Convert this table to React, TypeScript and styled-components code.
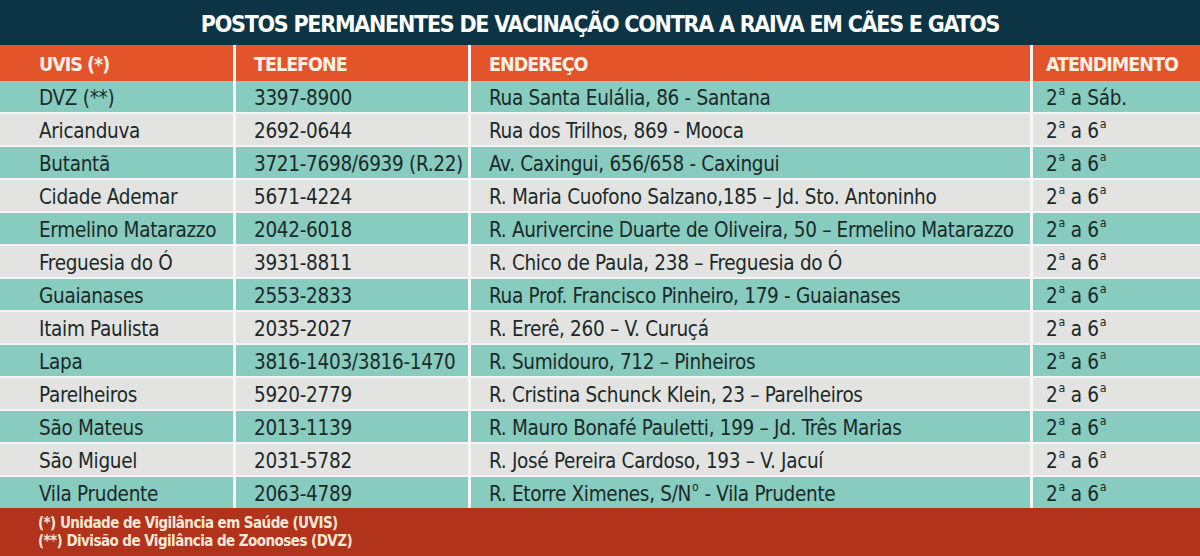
import React from "react";
import styled, { createGlobalStyle } from "styled-components";

const GlobalStyle = createGlobalStyle`
  html, body {
    margin: 0;
    padding: 0;
    background: #ffffff;
  }
  body {
    width: 1200px;
    height: 556px;
    overflow: hidden;
  }
`;

const BODY_FONT = `"DejaVu Sans Condensed", "DejaVu Sans", sans-serif`;
const BOLD_FONT = `"DejaVu Sans Condensed", "DejaVu Sans", sans-serif`;

type Tone = "teal" | "grey" | "head";

const toneColor: Record<Tone, string> = {
  teal: "#88cbbf",
  grey: "#e3e3e1",
  head: "#e4542b",
};

const Page = styled.div`
  width: 1200px;
  height: 556px;
  display: flex;
  flex-direction: column;
  background: #f4f4f2;
`;

const TitleBar = styled.header`
  height: 45px;
  flex: none;
  display: flex;
  align-items: center;
  justify-content: center;
  background: #0c3444;
  color: #ffffff;
  font-family: ${BOLD_FONT};
  font-weight: 700;
  font-size: 23px;
  letter-spacing: -1.25px;
  padding-top: 2px;
  box-sizing: border-box;
`;

const Row = styled.div<{ $height: number }>`
  display: grid;
  grid-template-columns: 233px 232px 559px 1fr;
  column-gap: 3px;
  height: ${(p) => p.$height}px;
  background: #f7f7f5;
`;

const Cell = styled.div<{ $tone: Tone }>`
  display: flex;
  align-items: center;
  padding: 3px 0 0 18px;
  background: ${(p) => toneColor[p.$tone]};
  white-space: pre;
  overflow: hidden;
  font-family: ${(p) => (p.$tone === "head" ? BOLD_FONT : BODY_FONT)};
  font-weight: ${(p) => (p.$tone === "head" ? 700 : 400)};
  font-size: ${(p) => (p.$tone === "head" ? 19.5 : 20.5)}px;
  letter-spacing: ${(p) => (p.$tone === "head" ? -1 : -0.3)}px;
  color: ${(p) => (p.$tone === "head" ? "#fbf0e4" : "#1b2a29")};

  &:first-child {
    padding-left: 39px;
  }
  &:last-child {
    padding-left: 13px;
  }
`;

const Body = styled.div`
  display: flex;
  flex-direction: column;
  gap: 2px;
  background: #f4f4f2;
`;

const Sup = styled.span`
  font-size: 0.6em;
  position: relative;
  top: -0.55em;
  margin-left: 1px;
  letter-spacing: 0;
`;

const Footer = styled.footer`
  flex: 1;
  background: #b1331b;
  padding: 6px 0 0 38px;
  font-family: ${BOLD_FONT};
  font-weight: 700;
  font-size: 15px;
  line-height: 18px;
  letter-spacing: -0.55px;
  color: #f6e8d6;
`;

const Ord = () => <Sup>a</Sup>;

type Posto = {
  uvis: string;
  tel: string;
  end: React.ReactNode;
  atend: React.ReactNode;
};

const SEMANA = (
  <>
    2<Ord /> a 6<Ord />
  </>
);

const postos: Posto[] = [
  {
    uvis: "DVZ (**)",
    tel: "3397-8900",
    end: "Rua Santa Eulália, 86 - Santana",
    atend: (
      <>
        2<Ord /> a Sáb.
      </>
    ),
  },
  { uvis: "Aricanduva", tel: "2692-0644", end: "Rua dos Trilhos, 869 - Mooca", atend: SEMANA },
  { uvis: "Butantã", tel: "3721-7698/6939 (R.22)", end: "Av. Caxingui, 656/658 - Caxingui", atend: SEMANA },
  { uvis: "Cidade Ademar", tel: "5671-4224", end: "R. Maria Cuofono Salzano,185 – Jd. Sto. Antoninho", atend: SEMANA },
  { uvis: "Ermelino Matarazzo", tel: "2042-6018", end: "R. Aurivercine Duarte de Oliveira, 50 – Ermelino Matarazzo", atend: SEMANA },
  { uvis: "Freguesia do Ó", tel: "3931-8811", end: "R. Chico de Paula, 238 – Freguesia do Ó", atend: SEMANA },
  { uvis: "Guaianases", tel: "2553-2833", end: "Rua Prof. Francisco Pinheiro, 179 - Guaianases", atend: SEMANA },
  { uvis: "Itaim Paulista", tel: "2035-2027", end: "R. Ererê, 260 – V. Curuçá", atend: SEMANA },
  { uvis: "Lapa", tel: "3816-1403/3816-1470", end: "R. Sumidouro, 712 – Pinheiros", atend: SEMANA },
  { uvis: "Parelheiros", tel: "5920-2779", end: "R. Cristina Schunck Klein, 23 – Parelheiros", atend: SEMANA },
  { uvis: "São Mateus", tel: "2013-1139", end: "R. Mauro Bonafé Pauletti, 199 – Jd. Três Marias", atend: SEMANA },
  { uvis: "São Miguel", tel: "2031-5782", end: "R. José Pereira Cardoso, 193 – V. Jacuí", atend: SEMANA },
  {
    uvis: "Vila Prudente",
    tel: "2063-4789",
    end: (
      <>
        R. Etorre Ximenes, S/N<Sup>o</Sup> - Vila Prudente
      </>
    ),
    atend: SEMANA,
  },
];

const App = () => {
  return (
    <Page>
      <GlobalStyle />
      <TitleBar>POSTOS PERMANENTES DE VACINAÇÃO CONTRA A RAIVA EM CÃES E GATOS</TitleBar>
      <Row $height={36}>
        <Cell $tone="head">UVIS (*)</Cell>
        <Cell $tone="head">TELEFONE</Cell>
        <Cell $tone="head">ENDEREÇO</Cell>
        <Cell $tone="head">ATENDIMENTO</Cell>
      </Row>
      <Body>
        {postos.map((p, i) => {
          const tone: Tone = i % 2 === 0 ? "teal" : "grey";
          return (
            <Row key={p.uvis} $height={31}>
              <Cell $tone={tone}>{p.uvis}</Cell>
              <Cell $tone={tone}>{p.tel}</Cell>
              <Cell $tone={tone}>{p.end}</Cell>
              <Cell $tone={tone}>{p.atend}</Cell>
            </Row>
          );
        })}
      </Body>
      <Footer>
        <div>(*) Unidade de Vigilância em Saúde (UVIS)</div>
        <div>(**) Divisão de Vigilância de Zoonoses (DVZ)</div>
      </Footer>
    </Page>
  );
};

export default App;
